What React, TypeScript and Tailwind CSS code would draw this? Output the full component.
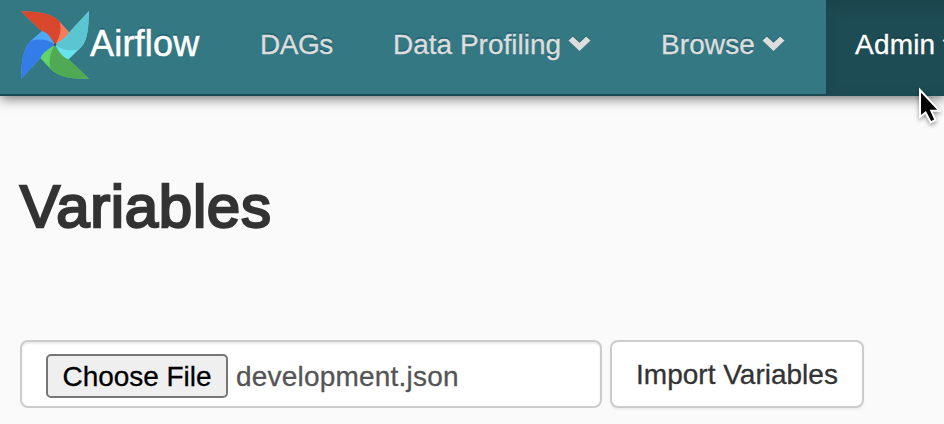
import type { ReactNode } from "react";

function Pinwheel() {
  return (
    <svg className="h-[70px] w-[70px] shrink-0" viewBox="60 30 210 210" aria-hidden="true">
      <path d="M63 34C105 36 153 36 179 65L208 97C203 108 190 119 165 134C152 116 143 101 124 93Z" fill="#f17c5e" />
      <path d="M63 34C105 36 153 36 179 65C186 91 178 116 165 134C152 116 143 97 124 93Z" fill="#d9472c" />
      <path d="M267 33C265 76 266 125 237 148L206 178C191 174 176 158 165 134C188 119 201 110 208 97Z" fill="#68e2ee" />
      <path d="M267 33C265 76 266 125 237 148C211 155 184 149 165 134C188 119 203 112 208 97Z" fill="#5bc5d2" />
      <path d="M267 236C224 236 180 236 151 206L121 174C126 157 144 147 165 134C176 158 191 174 206 178Z" fill="#62d269" />
      <path d="M267 236C224 236 180 236 151 206C145 180 153 153 165 134C176 158 188 174 206 178Z" fill="#50a953" />
      <path d="M64 236C64 193 66 147 93 122L126 93C143 97 152 113 165 134C144 147 127 158 121 174Z" fill="#4da9f9" />
      <path d="M64 236C64 193 66 147 93 122C119 114 147 119 165 134C144 147 127 158 121 174Z" fill="#347de9" />
      <circle cx="165" cy="134" r="4" fill="#49504f" />
    </svg>
  );
}

function Chevron() {
  return (
    <svg
      className="mt-[36px] h-[15px] w-[23px] shrink-0 overflow-visible drop-shadow-[0_-1px_0_#20606b]"
      viewBox="0 0 23 15"
      aria-hidden="true"
    >
      <path d="M.5 4.6 4.8.4 11.5 6.7 18.2.4 22.5 4.6 11.5 15Z" fill="#ddd" />
    </svg>
  );
}

function NavLabel({ children }: { children: ReactNode }) {
  return (
    <span className="mt-[25px] text-[28px] leading-10 [-webkit-text-stroke:0.3px_currentColor] [text-shadow:0_-2px_0_#236472]">
      {children}
    </span>
  );
}

export default function App() {
  return (
    <div className="relative h-[424px] w-[944px] overflow-hidden bg-[#fafafa] font-['Liberation_Sans',Arial,sans-serif] whitespace-nowrap text-[#333]">
      <nav className="relative flex h-24 items-start border-b-2 border-[#1c4a52] bg-[#347883] text-[#ddd] shadow-[0_2px_12px_rgba(0,0,0,0.6)]">
        <div className="flex w-[234px] shrink-0 items-start pl-5 pt-[10px]">
          <Pinwheel />
          <span className="mt-[14px] text-[36px] leading-10 tracking-[0.2px] text-white [-webkit-text-stroke:0.5px_#fff] [text-shadow:0_-2px_0_#236472]">
            Airflow
          </span>
        </div>
        <div className="flex w-[134px] shrink-0 items-start pl-[26px] tracking-[-0.5px]">
          <NavLabel>DAGs</NavLabel>
        </div>
        <div className="flex w-[267px] shrink-0 items-start gap-[7px] pl-[25px]">
          <NavLabel>Data Profiling</NavLabel>
          <Chevron />
        </div>
        <div className="flex w-[191px] shrink-0 items-start gap-[7px] pl-[26px] tracking-[0.1px]">
          <NavLabel>Browse</NavLabel>
          <Chevron />
        </div>
        <div className="flex h-[94px] w-[200px] shrink-0 items-start gap-[7px] bg-[#1e4c54] pl-[29px] tracking-[0.2px] text-white shadow-[inset_0_6px_16px_rgba(0,0,0,0.125)]">
          <span className="mt-[25px] text-[28px] leading-10 [-webkit-text-stroke:0.3px_#fff] [text-shadow:0_-2px_0_#193f46]">
            Admin
          </span>
          <Chevron />
        </div>
      </nav>
      <main className="px-5 pt-[78px]">
        <h1 className="text-[60px] leading-[66px] tracking-[0.65px] [-webkit-text-stroke:2.4px_#333]">Variables</h1>
        <form className="mt-[100px] flex gap-2">
          <div className="flex h-[68px] w-[582px] items-center rounded-lg border-2 border-[#ccc] bg-white pl-6 pt-[3px] text-[28px] text-[#555] shadow-[inset_0_2px_2px_rgba(0,0,0,0.075)]">
            <button
              type="button"
              className="h-[44px] w-[182px] rounded-[5px] border-2 border-[#767676] bg-[#efefef] pt-px text-[28px] leading-10 tracking-[-0.05px] text-black [-webkit-text-stroke:0.3px_#000]"
            >
              Choose File
            </button>
            <span className="ml-2 pt-0.5 leading-10 tracking-[0.2px] [-webkit-text-stroke:0.3px_#555]">
              development.json
            </span>
          </div>
          <button
            type="button"
            className="h-[68px] w-[254px] rounded-lg border-2 border-[#ccc] bg-white pt-0.5 text-[28px] leading-10 [-webkit-text-stroke:0.3px_#333] shadow-[0_2px_2px_rgba(0,0,0,0.05)]"
          >
            Import Variables
          </button>
        </form>
      </main>
      <svg
        className="absolute left-[917px] top-[86px] h-[42px] w-[28px] overflow-visible drop-shadow-[0_2px_2px_rgba(0,0,0,0.4)]"
        viewBox="0 0 28 42"
        aria-hidden="true"
      >
        <path d="M3 4V31L8.6 26.5 13.8 36.5 18.5 34 14.3 24.8H22.5Z" fill="#000" stroke="#fff" strokeWidth="2" />
      </svg>
    </div>
  );
}
